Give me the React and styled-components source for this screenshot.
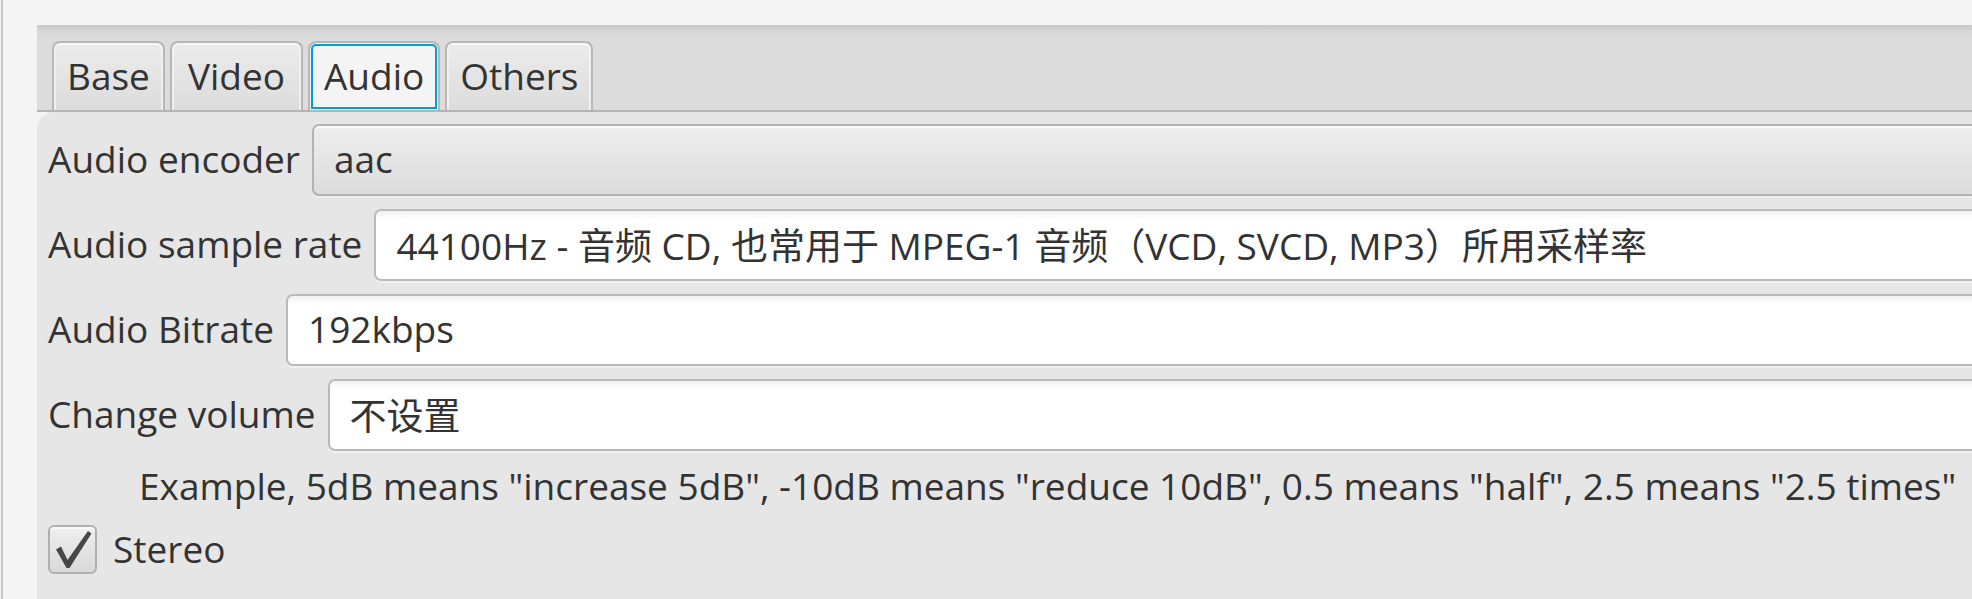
import React from 'react';
import styled, { createGlobalStyle, css } from 'styled-components';

const Global = createGlobalStyle`
  html, body { margin: 0; padding: 0; background: #f4f4f4; overflow: hidden; }
  body {
    font-family: "Open Sans", "Noto Sans CJK SC", sans-serif;
    color: #333333;
    -webkit-font-smoothing: antialiased;
  }
`;

const Window = styled.div`
  width: 2040px;
  height: 599px;
  box-sizing: border-box;
  margin-left: 1px;
  border-left: 2px solid #c8c8c8;
  padding: 25px 0 0 34px;
  background: #f4f4f4;
  display: flex;
  flex-direction: column;
`;

const TabPane = styled.div`
  flex: 1;
  display: flex;
  flex-direction: column;
`;

const TabHeader = styled.div`
  height: 87px;
  box-sizing: border-box;
  border-bottom: 2px solid #b5b5b5;
  background: linear-gradient(to bottom, #c9c9c9 0px, #d8d8d8 7px, #dcdcdc 14px);
  padding: 16px 0 0 15px;
  display: flex;
  align-items: flex-end;
  gap: 5px;
`;

const Tab = styled.div`
  height: 69px;
  box-sizing: border-box;
  padding: 0 ${(p) => p.$pad || 13}px 2px;
  border: 2px solid #b7b7b7;
  border-bottom: none;
  border-radius: 8px 8px 0 0;
  background: linear-gradient(to bottom, #ececec, #dcdcdc);
  box-shadow: inset 0 2px 0 #f6f6f6, inset 2px 0 0 #f0f0f0, inset -2px 0 0 #f0f0f0;
  display: flex;
  align-items: center;
  font-size: 37px;
  color: #333;
  ${(p) =>
    p.$selected &&
    css`
      background: #f4f4f4;
      box-shadow: inset 0 0 0 1px #e9f4f9, inset 0 0 0 3px #039ed3;
    `}
`;

const Content = styled.div`
  flex: 1;
  background: #e6e6e6;
  border-top-left-radius: 18px;
  padding: 12px 0 0 11px;
  display: flex;
  flex-direction: column;
  gap: 13px;
`;

const Row = styled.div`
  display: flex;
  align-items: center;
  gap: 12px;
  height: 72px;
`;

const Label = styled.div`
  font-size: 37px;
  white-space: nowrap;
  padding-bottom: 3px;
`;

const fieldBase = css`
  flex: 1;
  height: 72px;
  box-sizing: border-box;
  border-radius: 7px;
  padding: 0 0 3px 20px;
  display: flex;
  align-items: center;
  font-size: 37px;
  white-space: nowrap;
  color: #333;
`;

const ComboBox = styled.div`
  ${fieldBase}
  border: 2px solid #b3b3b3;
  background: linear-gradient(to bottom, #eeeeee, #dcdcdc);
  box-shadow: inset 0 2px 0 #f9f9f9, 0 2px 0 #eeeeee;
`;

const TextField = styled.div`
  ${fieldBase}
  border: 2px solid #bababa;
  background: linear-gradient(to bottom, #f0f0f0 0px, #fbfbfb 6px, #ffffff 10px);
  box-shadow: 0 2px 0 #f0f0f0;
`;

const Hint = styled.div`
  font-size: 37px;
  line-height: 48px;
  height: 48px;
  padding-left: 91px;
  margin-top: -2px;
  white-space: nowrap;
`;

const CheckRow = styled.label`
  display: flex;
  align-items: center;
  gap: 16px;
  height: 49px;
  margin-top: 2px;
  font-size: 37px;
`;

const CheckText = styled.span`
  padding-bottom: 3px;
`;

const CheckBox = styled.span`
  width: 49px;
  height: 49px;
  box-sizing: border-box;
  border: 2px solid #b0b0b0;
  border-radius: 6px;
  background: linear-gradient(to bottom, #efefef, #d9d9d9);
  box-shadow: inset 0 2px 0 #fafafa;
  display: flex;
  align-items: center;
  justify-content: center;
`;

function CheckMark() {
  return (
    <svg width="45" height="45" viewBox="0 0 45 45">
      <path d="M6 22.5 L11 19.5 L17.5 33 L38 4 L41.5 6.5 L19.5 41 L16.5 41 Z" fill="#474747" />
    </svg>
  );
}

export default function App() {
  return (
    <>
      <Global />
      <Window>
        <TabPane>
          <TabHeader>
            <Tab>Base</Tab>
            <Tab $pad={16}>Video</Tab>
            <Tab $selected $pad={14}>Audio</Tab>
            <Tab>Others</Tab>
          </TabHeader>
          <Content>
            <Row>
              <Label>Audio encoder</Label>
              <ComboBox>aac</ComboBox>
            </Row>
            <Row>
              <Label>Audio sample rate</Label>
              <TextField>44100Hz - 音频 CD, 也常用于 MPEG-1 音频（VCD, SVCD, MP3）所用采样率</TextField>
            </Row>
            <Row>
              <Label>Audio Bitrate</Label>
              <TextField>192kbps</TextField>
            </Row>
            <Row>
              <Label>Change volume</Label>
              <TextField>不设置</TextField>
            </Row>
            <Hint>
              Example, 5dB means "increase 5dB", -10dB means "reduce 10dB", 0.5 means "half", 2.5 means "2.5 times"
            </Hint>
            <CheckRow>
              <CheckBox>
                <CheckMark />
              </CheckBox>
              <CheckText>Stereo</CheckText>
            </CheckRow>
          </Content>
        </TabPane>
      </Window>
    </>
  );
}
